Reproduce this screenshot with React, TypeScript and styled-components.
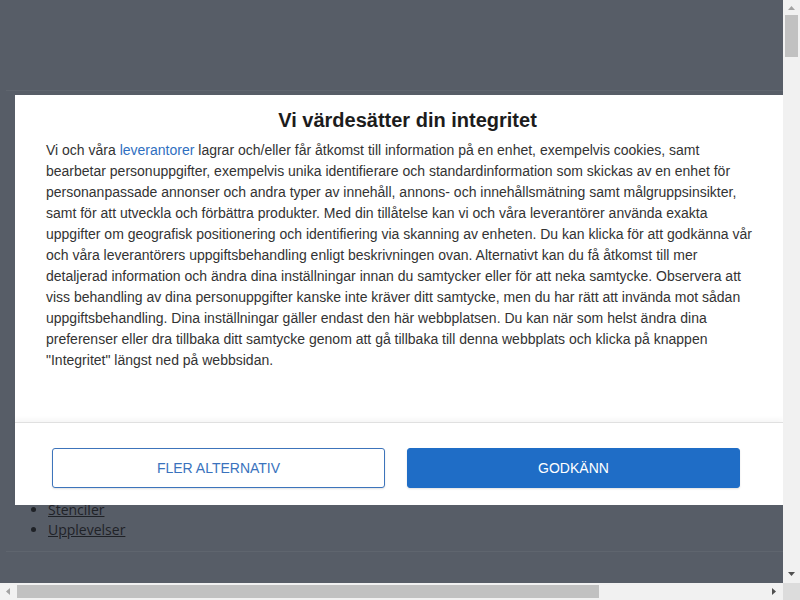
import React from 'react';
import styled, {createGlobalStyle} from 'styled-components';

const Global = createGlobalStyle`
  html, body {
    margin: 0;
    padding: 0;
    overflow: hidden;
  }
  body {
    font-family: "Liberation Sans", Arial, sans-serif;
  }
`;

const Screen = styled.div`
  width: 800px;
  height: 600px;
  display: grid;
  grid-template-columns: 1fr 17px;
  grid-template-rows: 1fr 17px;
`;

const Viewport = styled.div`
  position: relative;
  overflow: hidden;
  background: #575d67;
  display: flex;
  flex-direction: column;
`;

const Rule = styled.div<{ $top: number }>`
  margin: ${({$top}) => $top}px 0 0 6px;
  height: 1px;
  background: #5f656e;
`;

const BehindList = styled.ul`
  margin: 409px 0 11px;
  padding: 0 0 0 48px;
  font-family: "Open Sans", sans-serif;
  font-size: 14px;
  line-height: 20px;
  color: #1f2227;

  li::marker {
    color: #1f2227;
  }

  a {
    color: inherit;
    text-decoration: underline;
  }
`;

const Dialog = styled.div`
  position: absolute;
  top: 95px;
  left: 15px;
  right: 0;
  height: 410px;
  background: #fff;
  display: flex;
  flex-direction: column;
`;

const Content = styled.div`
  flex: 1;
  padding: 13px 25px 0 31px;
`;

const Title = styled.h2`
  margin: 0 -11px 8px 0;
  text-align: center;
  font-size: 20px;
  line-height: 24px;
  font-weight: bold;
  color: #1c1c1c;
`;

const Text = styled.p`
  margin: 0;
  font-size: 14px;
  line-height: 21px;
  color: #333;

  a {
    color: #2f6fbf;
    text-decoration: none;
  }
`;

const Footer = styled.div`
  height: 83px;
  box-sizing: border-box;
  border-top: 1px solid #e0e0e0;
  box-shadow: 0 -3px 5px rgba(0, 0, 0, 0.04);
  padding: 25px 43px 0 37px;
  display: flex;
  gap: 22px;
  align-items: flex-start;
`;

const Button = styled.button<{ $primary?: boolean }>`
  flex: 1;
  height: 40px;
  border-radius: 3px;
  font-family: "Liberation Sans", Arial, sans-serif;
  font-size: 14px;
  cursor: pointer;
  border: 1px solid ${({$primary}) => ($primary ? '#1f6dc6' : '#3d74bb')};
  background: ${({$primary}) => ($primary ? '#1f6dc6' : '#fff')};
  color: ${({$primary}) => ($primary ? '#fff' : '#3a72bd')};
  box-shadow: 0 1px 2px rgba(0, 0, 0, 0.12);
`;

const VTrack = styled.div`
  background: #f1f1f1;
  display: flex;
  flex-direction: column;
  align-items: center;
`;

const HTrack = styled.div`
  background: #f1f1f1;
  display: flex;
  align-items: center;
`;

const Arrow = styled.div`
  width: 17px;
  height: 17px;
  flex: none;
  display: flex;
  align-items: center;
  justify-content: center;
`;

const VThumb = styled.div`
  width: 13px;
  height: 42px;
  margin-top: -2px;
  background: #c1c1c1;
`;

const HThumb = styled.div`
  height: 13px;
  width: 582px;
  background: #c1c1c1;
`;

const Fill = styled.div`
  flex: 1;
`;

const Corner = styled.div`
  background: #dcdcdc;
`;

const Tri = ({dir, color}: { dir: 'up' | 'down' | 'left' | 'right'; color: string }) => {
  const pts = {
    up: '1,6 4.5,2 8,6',
    down: '1,2 4.5,6 8,2',
    left: '6,1 2,4.5 6,8',
    right: '2,1 6,4.5 2,8',
  }[dir];
  return (
    <svg width="9" height="9" viewBox="0 0 9 9">
      <polygon points={pts} fill={color}/>
    </svg>
  );
};

export default function App() {
  return (
    <>
      <Global/>
      <Screen>
        <Viewport>
          <Rule $top={90}/>
          <BehindList>
            <li><a>Stenciler</a></li>
            <li><a>Upplevelser</a></li>
          </BehindList>
          <Rule $top={0}/>
          <Dialog>
            <Content>
              <Title>Vi värdesätter din integritet</Title>
              <Text>
                Vi och våra <a>leverantorer</a> lagrar och/eller får åtkomst till information på en enhet,
                exempelvis cookies, samt bearbetar personuppgifter, exempelvis unika identifierare och
                standardinformation som skickas av en enhet för personanpassade annonser och andra typer av
                innehåll, annons- och innehållsmätning samt målgruppsinsikter, samt för att utveckla och
                förbättra produkter. Med din tillåtelse kan vi och våra leverantörer använda exakta uppgifter
                om geografisk positionering och identifiering via skanning av enheten. Du kan klicka för att
                godkänna vår och våra leverantörers uppgiftsbehandling enligt beskrivningen ovan. Alternativt
                kan du få åtkomst till mer detaljerad information och ändra dina inställningar innan du
                samtycker eller för att neka samtycke. Observera att viss behandling av dina personuppgifter
                kanske inte kräver ditt samtycke, men du har rätt att invända mot sådan uppgiftsbehandling.
                Dina inställningar gäller endast den här webbplatsen. Du kan när som helst ändra dina
                preferenser eller dra tillbaka ditt samtycke genom att gå tillbaka till denna webbplats och
                klicka på knappen "Integritet" längst ned på webbsidan.
              </Text>
            </Content>
            <Footer>
              <Button>FLER ALTERNATIV</Button>
              <Button $primary>GODKÄNN</Button>
            </Footer>
          </Dialog>
        </Viewport>
        <VTrack>
          <Arrow><Tri dir="up" color="#a3a3a3"/></Arrow>
          <VThumb/>
          <Fill/>
          <Arrow><Tri dir="down" color="#505050"/></Arrow>
        </VTrack>
        <HTrack>
          <Arrow><Tri dir="left" color="#a3a3a3"/></Arrow>
          <HThumb/>
          <Fill/>
          <Arrow><Tri dir="right" color="#505050"/></Arrow>
        </HTrack>
        <Corner/>
      </Screen>
    </>
  );
}
